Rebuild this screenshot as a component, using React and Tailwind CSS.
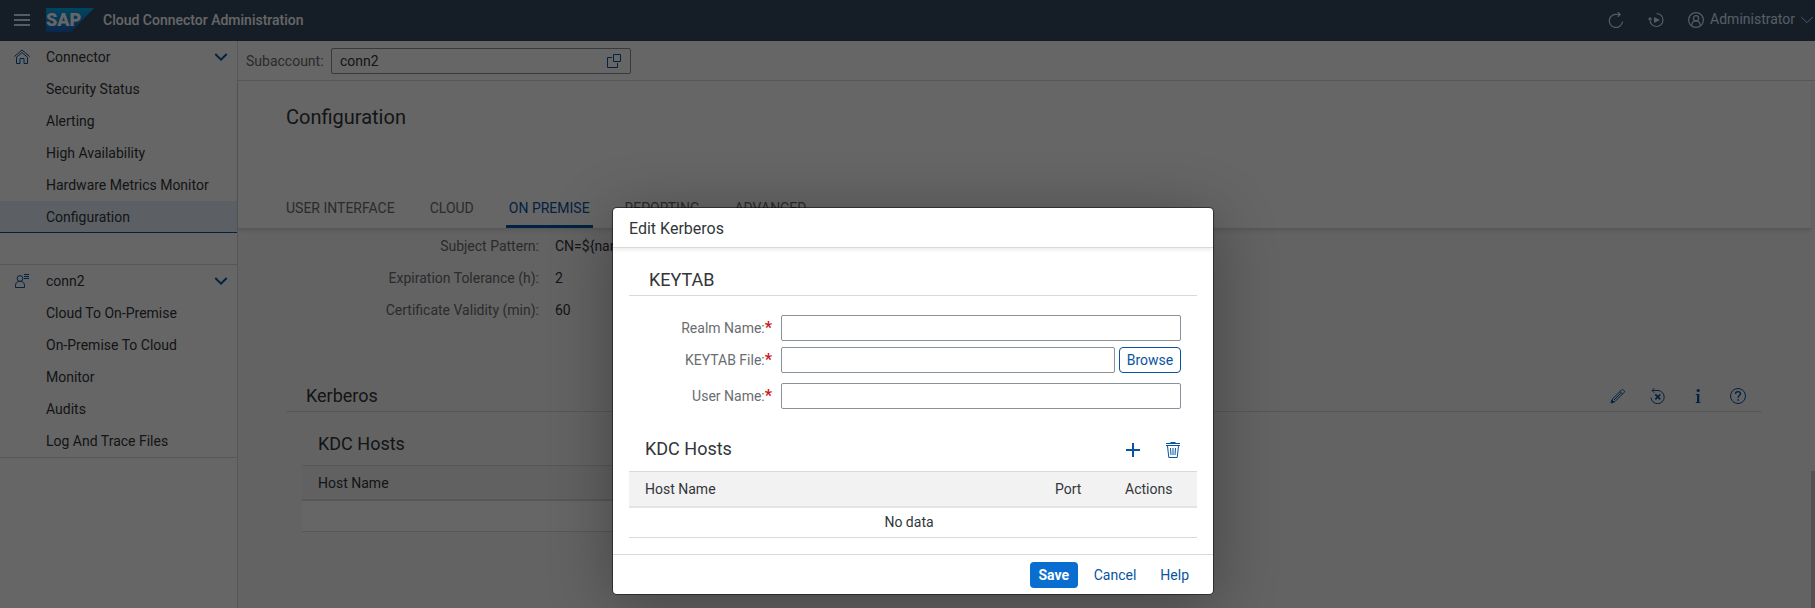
import React from "react";

const FONT = "font-['Roboto','Liberation_Sans',sans-serif]";

function Icon({ size = 16, children, className = "" }) {
  return (
    <svg
      width={size}
      height={size}
      viewBox="0 0 16 16"
      fill="none"
      stroke="currentColor"
      strokeWidth="1"
      className={`shrink-0 ${className}`}
      aria-hidden="true"
    >
      {children}
    </svg>
  );
}

const MenuIcon = () => (
  <Icon>
    <path d="M0 2h16M0 7h16M0 12h16" strokeWidth="2" />
  </Icon>
);

const HomeIcon = () => (
  <Icon>
    <path d="M0.3 7.6 8 1l7.7 6.6" />
    <path d="M2.5 8.2v6.3h3.5V9.5h4v5h3.5V8.2L8 3.6z" />
  </Icon>
);

const AccountIcon = () => (
  <Icon>
    <circle cx="6" cy="5.5" r="2.9" />
    <path d="M1.5 14.5v-2.2c0-2 1.4-3.3 3-3.8h3c1.6.5 3 1.8 3 3.8v2.2z" />
    <path d="M10 1.5h5M10 3.5h5M10 5.5h5" />
  </Icon>
);

const SlimArrow = ({ width = "2" }) => (
  <Icon>
    <path d="M2.3 5l5.7 5.7L13.7 5" strokeWidth={width} />
  </Icon>
);

const ValueHelpIcon = () => (
  <Icon>
    <path d="M7.5 1.5h7v7h-7z" />
    <path d="M6 4.5H1.5v10h10V10" />
  </Icon>
);

const RefreshIcon = () => (
  <Icon>
    <path d="M14.5 9.5A6.6 6.6 0 1 1 9.5 2.5h2.5" strokeWidth="1.2" />
    <path d="M9.8.2 12.2 2.5 9.8 4.8" strokeWidth="1.2" />
  </Icon>
);

const PlayIcon = () => (
  <Icon>
    <path d="M8.5 1.5A6.5 6.5 0 1 1 2 8V5.8" strokeWidth="1.2" />
    <path d="M.4 7.6 2 5.8l1.800 1.800" strokeWidth="1.2" />
    <path d="M6 5v6l6-3z" fill="currentColor" stroke="none" />
  </Icon>
);

const PersonIcon = () => (
  <Icon>
    <circle cx="8" cy="8" r="7.4" strokeWidth="1.2" />
    <circle cx="8" cy="6.2" r="2.6" strokeWidth="1.2" />
    <path d="M3.8 13.5c0-2.8 1.7-4.5 4.2-4.5s4.2 1.7 4.2 4.5" strokeWidth="1.2" />
  </Icon>
);

const EditIcon = () => (
  <Icon>
    <path d="M1.5 14.5l1-3.5L11.8 1.7c.4-.4.8-.4 1.2 0l1.3 1.3c.4.4.4.8 0 1.2L5 13.5z" />
    <path d="M10 3.6l2.5 2.4" />
    <path d="M4 12l6.8-6.8" />
    <path d="M1 15l.9-2.8 1.9 1.9z" fill="currentColor" />
  </Icon>
);

const ResetIcon = () => (
  <Icon>
    <path d="M1 9.5A6.6 6.6 0 1 0 8 2.5H2.5" />
    <path d="M4.3.2 2 2.5l2.3 2.3" />
    <path d="M5.3 6.3l5 5M10.3 6.3l-5 5" strokeWidth="1.7" />
  </Icon>
);

const InfoIcon = () => (
  <Icon>
    <circle cx="8.2" cy="2.5" r="1.6" fill="currentColor" stroke="none" />
    <path d="M5.8 6h3.5v8h1v1H5.8v-1h1.2V7H5.8z" fill="currentColor" stroke="none" />
  </Icon>
);

const HelpIcon = () => (
  <Icon>
    <circle cx="8" cy="8" r="7.5" />
    <path d="M5.5 6c0-1.5 1-2.4 2.5-2.4s2.5.9 2.5 2.2c0 1.7-2.4 1.7-2.4 3.9" strokeWidth="1.4" />
    <path d="M7.3 11.2h1.6v1.6H7.3z" fill="currentColor" stroke="none" />
  </Icon>
);

const AddIcon = () => (
  <Icon>
    <path d="M8 1v14M1 8h14" strokeWidth="2" />
  </Icon>
);

const DeleteIcon = () => (
  <Icon>
    <path d="M1 1.5h14M1 3.5h14M5.5.5h5" />
    <path d="M2.5 4l1.3 11.5h8.4L13.5 4" />
    <path d="M5.5 6l.5 7M8 6v7M10.5 6l-.5 7" />
  </Icon>
);

function Logo() {
  return (
    <svg width="48" height="24" viewBox="0 0 48 24" role="img" aria-label="SAP" className="shrink-0">
      <defs>
        <linearGradient id="logo" x1="0" y1="0" x2="0" y2="1">
          <stop offset="0" stopColor="#00aeef" />
          <stop offset="1" stopColor="#1d61bd" />
        </linearGradient>
      </defs>
      <path d="M0 0h48L25 24H0z" fill="url(#logo)" />
      <text x="0" y="18" fontSize="18" fontWeight="900" fill="#fff" fontFamily="Roboto, 'Liberation Sans', sans-serif">
        SAP
      </text>
    </svg>
  );
}

function NavGroup({ icon, title, items, active }) {
  return (
    <section>
      <button type="button" className="flex h-8 w-full items-center pr-2 pl-3.5 text-left">
        <span className="flex w-8 text-[#0854a0]">{icon}</span>
        <span className="flex-1">{title}</span>
        <span className="text-[#0854a0]">
          <SlimArrow />
        </span>
      </button>
      <ul>
        {items.map((item) => (
          <li key={item}>
            <a
              href="#"
              className={
                item === active
                  ? "flex h-8 items-center border-b border-[#0854a0] bg-[#e5f0fa] pl-[46px]"
                  : "flex h-8 items-center pl-[46px]"
              }
            >
              {item}
            </a>
          </li>
        ))}
      </ul>
    </section>
  );
}

function Sidebar() {
  return (
    <nav className="w-[238px] shrink-0 border-r border-[#d9d9d9] bg-white">
      <NavGroup
        icon={<HomeIcon />}
        title="Connector"
        active="Configuration"
        items={["Security Status", "Alerting", "High Availability", "Hardware Metrics Monitor", "Configuration"]}
      />
      <div className="mt-[31px] border-y border-[#d9d9d9]">
        <NavGroup
          icon={<AccountIcon />}
          title="conn2"
          items={["Cloud To On-Premise", "On-Premise To Cloud", "Monitor", "Audits", "Log And Trace Files"]}
        />
      </div>
    </nav>
  );
}

function Header() {
  return (
    <header className="flex h-[41px] shrink-0 items-center bg-[#354a5f] pl-3.5 text-[#d1e8ff]">
      <button type="button" aria-label="Menu" className="mr-4">
        <MenuIcon />
      </button>
      <div className="pb-0.5">
        <Logo />
      </div>
      <h1 className="ml-[9px] flex-1 pb-0.5 text-sm font-medium text-white">Cloud Connector Administration</h1>
      <div className="flex items-center gap-6 pb-px">
        <button type="button" aria-label="Refresh">
          <RefreshIcon />
        </button>
        <button type="button" aria-label="Run">
          <PlayIcon />
        </button>
        <button type="button" className="flex items-center">
          <PersonIcon />
          <span className="pr-1 pb-0.5 pl-1.5 text-sm">Administrator</span>
          <SlimArrow width="1" />
        </button>
      </div>
    </header>
  );
}

const TABS = ["USER INTERFACE", "CLOUD", "ON PREMISE", "REPORTING", "ADVANCED"];

function Tabs() {
  return (
    <div role="tablist" className="flex gap-[29px]">
      {TABS.map((tab) => (
        <button
          key={tab}
          type="button"
          role="tab"
          aria-selected={tab === "ON PREMISE"}
          className={
            tab === "ON PREMISE"
              ? "h-9 rounded-t-xs border-b-3 border-[#0854a0] px-[3px] pb-0.5 text-[#0854a0]"
              : "h-9 border-b-3 border-transparent px-[3px] pb-0.5 text-[#6a6d70]"
          }
        >
          {tab}
        </button>
      ))}
    </div>
  );
}

const DETAILS = [
  ["Subject Pattern:", "CN=${name}"],
  ["Expiration Tolerance (h):", "2"],
  ["Certificate Validity (min):", "60"],
];

function Content() {
  return (
    <div className="flex min-h-0 flex-1">
      <div className="flex min-w-0 flex-1 flex-col">
        <div className="z-10 flex h-[148px] shrink-0 flex-col justify-between border-b border-[#d9d9d9] bg-white pt-[22px] pl-[45px] shadow-[0_2px_4px_rgba(0,0,0,0.1)]">
          <h2 className="pl-[3px] text-xl">Configuration</h2>
          <Tabs />
        </div>
        <div className="min-h-0 flex-1 overflow-hidden pr-[49px] pl-12">
          <dl className="mb-12 pt-px">
            {DETAILS.map(([label, value]) => (
              <div key={label} className="flex h-8 items-center gap-4">
                <dt className="w-[253px] text-right text-[#6a6d70]">{label}</dt>
                <dd>{value}</dd>
              </div>
            ))}
          </dl>
          <div className="flex h-[38px] items-center border-b border-[#d9d9d9] pr-4 pl-5">
            <h3 className="flex-1 pt-1.5 text-lg">Kerberos</h3>
            <div className="flex gap-6 pt-1.5 text-[#0854a0]">
              <button type="button" aria-label="Edit"><EditIcon /></button>
              <button type="button" aria-label="Reset"><ResetIcon /></button>
              <button type="button" aria-label="Information"><InfoIcon /></button>
              <button type="button" aria-label="Help"><HelpIcon /></button>
            </div>
          </div>
          <div className="mt-2.5 ml-4 w-[680px]">
            <h4 className="flex h-[43px] items-center pl-4 text-lg">KDC Hosts</h4>
            <table className="w-full border-collapse">
              <thead>
                <tr className="h-[34px] border-t border-b-2 border-[#d9d9d9] bg-[#f2f2f2]">
                  <th className="pt-0.5 pl-4 text-left font-normal">Host Name</th>
                </tr>
              </thead>
              <tbody>
                <tr className="h-8 border-b border-[#d9d9d9] bg-white">
                  <td />
                </tr>
              </tbody>
            </table>
          </div>
        </div>
      </div>
      <div className="flex w-1 shrink-0 flex-col justify-end bg-[#fafafa]">
        <div className="h-[26%] bg-[#cccccc]" />
      </div>
    </div>
  );
}

function Field({ id, label, className = "", children }) {
  return (
    <div className={`flex items-center ${className}`}>
      <label htmlFor={id} className="flex w-[143px] justify-end text-[#6a6d70]">
        {label}
        <span className="text-base leading-5 font-bold text-[#cc1919]">*</span>
      </label>
      <div className="ml-[9px] flex w-[400px] gap-1">
        <input
          id={id}
          type="text"
          className="h-[26px] min-w-0 flex-1 rounded-xs border border-[#89919a] bg-white px-2 outline-none"
        />
        {children}
      </div>
    </div>
  );
}

function Dialog() {
  return (
    <div
      role="dialog"
      aria-modal="true"
      aria-labelledby="dialog-title"
      className="absolute top-[208px] left-[613px] w-[600px] rounded bg-white shadow-[0_0_0_1px_rgba(0,0,0,0.45),0_10px_64px_rgba(0,0,0,0.32)]"
    >
      <h2
        id="dialog-title"
        className="flex h-10 items-center border-b border-[#d9d9d9] pt-0.5 pl-4 text-base shadow-[0_2px_4px_rgba(0,0,0,0.08)]"
      >
        Edit Kerberos
      </h2>
      <div className="px-4 pb-4">
        <h3 className="flex h-12 items-end border-b border-[#d9d9d9] pb-px pl-5 text-lg">KEYTAB</h3>
        <form className="pt-[19px]">
          <Field id="realm" label="Realm Name:" />
          <Field id="keytab" label="KEYTAB File:" className="mt-1.5">
            <button
              type="button"
              className="h-[26px] w-[62px] rounded border border-[#0854a0] text-[#0854a0]"
            >
              Browse
            </button>
          </Field>
          <Field id="user" label="User Name:" className="mt-2.5" />
        </form>
        <div className="mt-[18px] flex h-11 items-center gap-6 pr-4 pl-4">
          <h3 className="flex-1 text-lg">KDC Hosts</h3>
          <div className="flex gap-6 pt-0.5 text-[#0854a0]">
            <button type="button" aria-label="Add"><AddIcon /></button>
            <button type="button" aria-label="Delete"><DeleteIcon /></button>
          </div>
        </div>
        <table className="w-full table-fixed border-collapse">
          <thead>
            <tr className="h-[35px] border-t border-b-2 border-t-[#d9d9d9] border-b-[#e4e4e4] bg-[#f2f2f2]">
              <th className="pl-4 text-left font-normal">Host Name</th>
              <th className="w-[70px] text-left font-normal">Port</th>
              <th className="w-[72px] text-left font-normal">Actions</th>
            </tr>
          </thead>
          <tbody>
            <tr className="h-[31px] border-b border-[#d9d9d9]">
              <td colSpan={3} className="pr-2 text-center">No data</td>
            </tr>
          </tbody>
        </table>
      </div>
      <footer className="flex h-10 items-center justify-end gap-2 border-t border-[#d9d9d9] pr-4 text-[#0854a0]">
        <button type="button" className="h-[26px] w-12 rounded bg-[#0a6ed1] font-bold text-white">Save</button>
        <button type="button" className="h-[26px] px-2">Cancel</button>
        <button type="button" className="h-[26px] px-2">Help</button>
      </footer>
    </div>
  );
}

export default function App() {
  return (
    <div className={`relative flex h-screen flex-col overflow-hidden bg-[#f7f7f7] text-sm text-[#32363a] ${FONT}`}>
      <Header />
      <div className="flex min-h-0 flex-1">
        <Sidebar />
        <main className="flex min-w-0 flex-1 flex-col">
          <div className="flex h-10 shrink-0 items-center border-b border-[#d9d9d9] bg-white pl-2">
            <label htmlFor="subaccount" className="w-[85px] text-[#6a6d70]">Subaccount:</label>
            <div className="flex h-[26px] w-[300px] items-center rounded-xs border border-[#89919a] px-2">
              <input id="subaccount" type="text" defaultValue="conn2" className="min-w-0 flex-1 outline-none" />
              <button type="button" aria-label="Select subaccount" className="text-[#0854a0]">
                <ValueHelpIcon />
              </button>
            </div>
          </div>
          <Content />
        </main>
      </div>
      <div className="absolute inset-0 z-20 bg-black/60" />
      <div className="absolute inset-0 z-30 overflow-hidden">
        <Dialog />
      </div>
    </div>
  );
}
